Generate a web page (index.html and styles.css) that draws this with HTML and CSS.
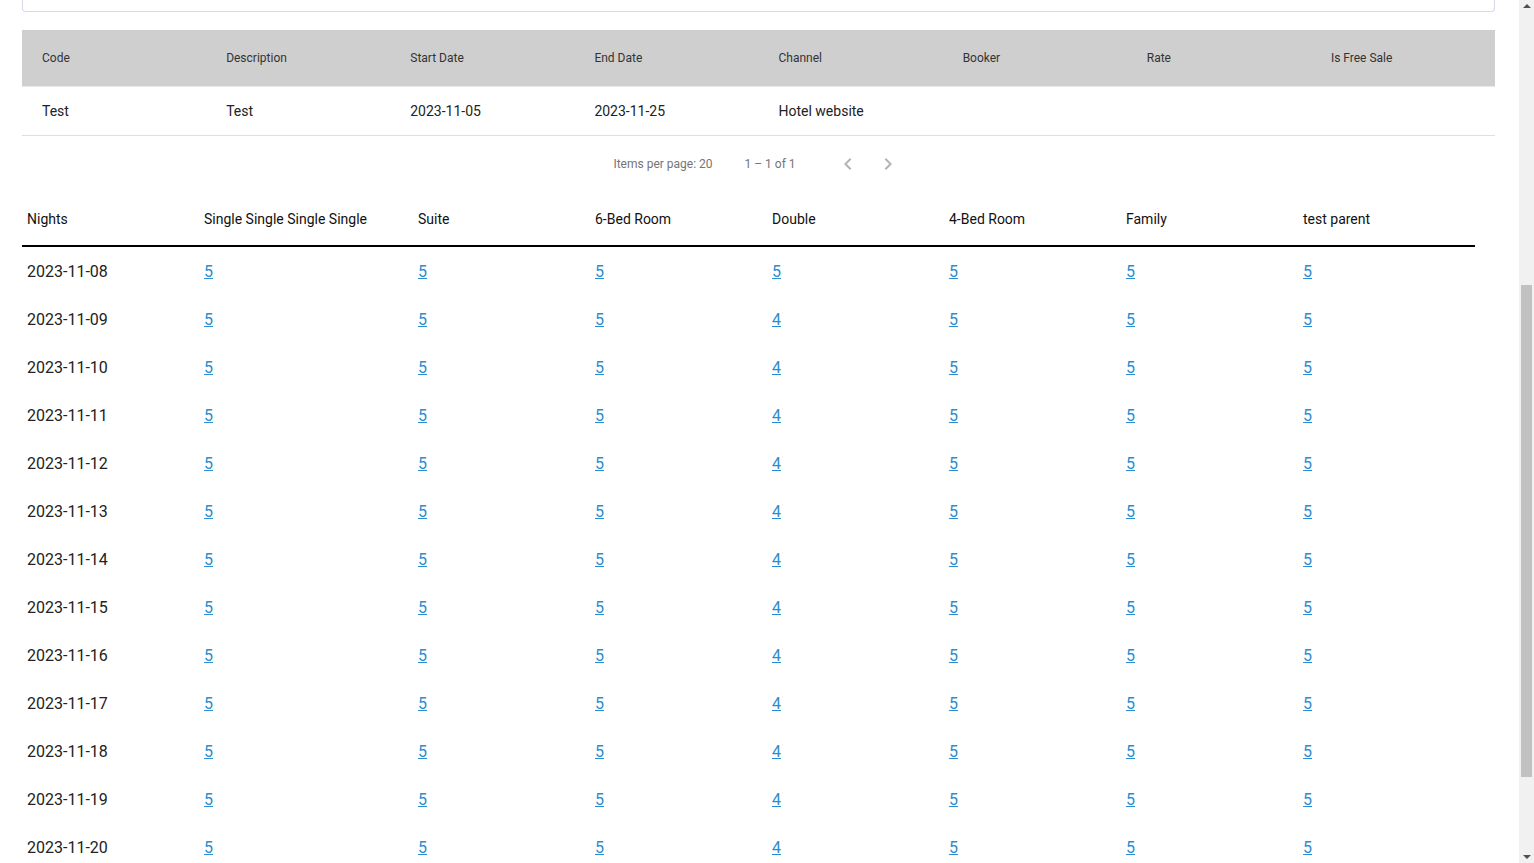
FILE: index.html
```html
<!DOCTYPE html>
<html>
<head>
<meta charset="utf-8">
<link rel="stylesheet" href="styles.css">
</head>
<body>
<div class="page">
  <div class="card-tail"></div>

  <table class="promo">
    <thead>
      <tr>
        <th>Code</th><th>Description</th><th>Start Date</th><th>End Date</th><th>Channel</th><th>Booker</th><th>Rate</th><th>Is Free Sale</th>
      </tr>
    </thead>
    <tbody>
      <tr>
        <td>Test</td><td>Test</td><td>2023-11-05</td><td>2023-11-25</td><td>Hotel website</td><td></td><td></td><td></td>
      </tr>
    </tbody>
  </table>

  <div class="paginator">
    <span class="per-page">Items per page: 20</span>
    <span class="range">1 – 1 of 1</span>
    <button class="nav-btn" aria-label="Previous page">
      <svg viewBox="0 0 24 24" width="24" height="24"><path d="M15.41 7.41 14 6l-6 6 6 6 1.41-1.41L10.83 12z" fill="#b3b3b3"/></svg>
    </button>
    <button class="nav-btn" aria-label="Next page">
      <svg viewBox="0 0 24 24" width="24" height="24"><path d="M10 6 8.59 7.41 13.17 12l-4.58 4.59L10 18l6-6z" fill="#b3b3b3"/></svg>
    </button>
  </div>

  <table class="avail">
    <colgroup>
      <col class="c-n"><col class="c-w"><col class="c-n"><col class="c-n"><col class="c-n"><col class="c-n"><col class="c-n"><col class="c-n">
    </colgroup>
    <thead>
      <tr>
        <th>Nights</th><th>Single Single Single Single</th><th>Suite</th><th>6-Bed Room</th><th>Double</th><th>4-Bed Room</th><th>Family</th><th>test parent</th>
      </tr>
    </thead>
    <tbody id="rows"></tbody>
  </table>
</div>

<div class="scrollbar">
  <div class="arrow up"></div>
  <div class="thumb"></div>
  <div class="arrow down"></div>
</div>
<script src="app.js"></script>
</body>
</html>
```

FILE: app.js
```js
(function () {
  var dates = ['2023-11-08','2023-11-09','2023-11-10','2023-11-11','2023-11-12','2023-11-13','2023-11-14','2023-11-15','2023-11-16','2023-11-17','2023-11-18','2023-11-19','2023-11-20'];
  var tbody = document.getElementById('rows');
  dates.forEach(function (d, i) {
    var tr = document.createElement('tr');
    var td = document.createElement('td');
    td.textContent = d;
    tr.appendChild(td);
    for (var c = 0; c < 7; c++) {
      var cell = document.createElement('td');
      var a = document.createElement('a');
      a.href = '#';
      a.textContent = (c === 3 && i > 0) ? '4' : '5';
      cell.appendChild(a);
      tr.appendChild(cell);
    }
    tbody.appendChild(tr);
  });
})();
```

FILE: styles.css
```css
html, body {
  margin: 0;
  padding: 0;
  background: #fff;
  overflow: hidden;
  height: 100%;
}
body {
  font-family: Roboto, "Liberation Sans", sans-serif;
  color: #212121;
}
.page {
  padding: 0 39px 0 22px;
}
.card-tail {
  height: 12px;
  border: 1px solid #d3dae3;
  border-top: none;
  border-radius: 0 0 4px 4px;
  box-sizing: border-box;
  margin-bottom: 18px;
}

.promo {
  width: 100%;
  border-collapse: collapse;
  table-layout: fixed;
}
.promo th {
  background: #cfcfcf;
  height: 56px;
  padding: 0 0 0 20px;
  text-align: left;
  font-weight: 400;
  font-size: 12px;
  color: #333;
}
.promo td {
  height: 48px;
  padding: 0 0 0 20px;
  font-size: 14px;
  color: #222;
  border-bottom: 1px solid #e0e0e0;
  border-top: 1px solid #e8e8e8;
}

.paginator {
  display: flex;
  align-items: center;
  justify-content: center;
  height: 56px;
  font-size: 12px;
  color: #757575;
  padding-left: 4px;
}
.per-page {
  margin-right: 32px;
}
.range {
  margin-right: 32px;
}
.nav-btn {
  width: 40px;
  height: 40px;
  border: none;
  background: none;
  padding: 0;
  display: flex;
  align-items: center;
  justify-content: center;
}

.avail {
  width: 1453px;
  border-collapse: collapse;
  table-layout: fixed;
}
.c-n { width: 177px; }
.c-w { width: 214px; }
.avail th {
  height: 53px;
  padding: 0 5px;
  text-align: left;
  font-weight: 400;
  font-size: 14px;
  color: #111;
  border-bottom: 2px solid #000;
}
.avail td {
  height: 48px;
  padding: 0 5px;
  font-size: 16px;
  color: #222;
}
.avail a {
  color: #2a8dcf;
  text-decoration: underline;
}

.scrollbar {
  position: fixed;
  top: 0;
  right: 0;
  bottom: 0;
  width: 15px;
  background: #f1f1f1;
}
.thumb {
  position: absolute;
  left: 2px;
  width: 11px;
  top: 285px;
  height: 492px;
  background: #c1c1c1;
}
.arrow {
  position: absolute;
  left: 4px;
  width: 0;
  height: 0;
  border-left: 4px solid transparent;
  border-right: 4px solid transparent;
}
.arrow.up {
  top: 4px;
  border-bottom: 4px solid #505050;
}
.arrow.down {
  bottom: 4px;
  border-top: 4px solid #505050;
}
```
